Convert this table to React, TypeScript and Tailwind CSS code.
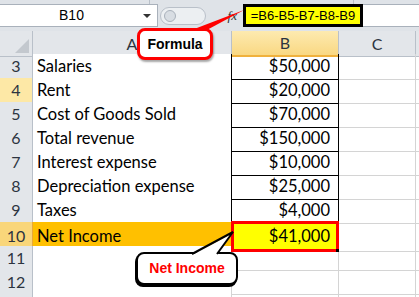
import React from 'react'

type Row = { n: number; label?: string; value?: string }

const rows: Row[] = [
  { n: 3, label: 'Salaries', value: '$50,000' },
  { n: 4, label: 'Rent', value: '$20,000' },
  { n: 5, label: 'Cost of Goods Sold', value: '$70,000' },
  { n: 6, label: 'Total revenue', value: '$150,000' },
  { n: 7, label: 'Interest expense', value: '$10,000' },
  { n: 8, label: 'Depreciation expense', value: '$25,000' },
  { n: 9, label: 'Taxes', value: '$4,000' },
  { n: 10, label: 'Net Income', value: '$41,000' },
  { n: 11 },
  { n: 12 },
  { n: 13 },
]

const cols = 'grid grid-cols-[33px_199px_107px_77px_1fr]'

function RowHeader({ n }: { n: number }) {
  const hi = n === 10
  const soft = n === 4
  return (
    <div
      className={
        'flex items-center justify-center border-r border-b text-[16px] text-[#2c3440] ' +
        (hi
          ? 'bg-[#f9d67a] border-r-[#e8a93a] border-b-[#c9b78e]'
          : soft
            ? 'bg-[#fde8a6] border-r-[#b9c0c9] border-b-[#c9c2a8]'
            : 'bg-[#e3e6ea] border-r-[#b9c0c9] border-b-[#c4c9d0]')
      }
    >
      {/* row 13 is only a sliver at the bottom edge */}
      {n < 13 ? n : null}
    </div>
  )
}

function DataRow({ row }: { row: Row }) {
  const filled = row.label !== undefined
  const net = row.n === 10
  return (
    <div className={cols + ' h-[24px]'}>
      <RowHeader n={row.n} />
      <div
        className={
          'flex items-center pl-[4px] border-r border-b ' +
          (filled ? 'border-black ' : 'border-[#d4d4d4] ') +
          (net ? 'bg-[#ffc000]' : 'bg-white')
        }
      >
        {row.label}
      </div>
      {net ? (
        <div className="relative flex items-center justify-end pr-[6px] border-[3px] border-[#ff0000] bg-[#ffff00] -mt-px -ml-px">
          {row.value}
          <span className="absolute right-[-3px] bottom-[-3px] w-[3px] h-[3px] bg-black" />
        </div>
      ) : (
        <div
          className={
            'flex items-center justify-end pr-[8px] border-r border-b ' +
            (filled ? 'border-black' : 'border-[#d4d4d4]')
          }
        >
          {row.value}
        </div>
      )}
      <div className="border-r border-b border-[#d4d4d4]" />
      <div className="border-b border-[#d4d4d4]" />
    </div>
  )
}

export default function App() {
  return (
    <div className="relative w-[419px] h-[297px] overflow-hidden bg-white font-['Lato','Liberation_Sans',sans-serif] text-[16.5px] text-black">
      {/* ribbon edge */}
      <div className="flex h-[4px] bg-[#dfe3e8]">
        <div className="w-[150px] border-r border-[#b9c0c9]" />
        <div className="w-[204px] border-r border-[#b9c0c9]" />
      </div>

      {/* formula bar */}
      <div className="flex h-[23px] bg-[#dfe3e8]">
        <div className="relative flex w-[158px] items-center bg-white border border-[#a9b1bb] border-l-0">
          <span className="w-[143px] text-center font-['Liberation_Sans',sans-serif] text-[14px]">B10</span>
          <span className="w-0 h-0 border-l-[4px] border-r-[4px] border-t-[4px] border-l-transparent border-r-transparent border-t-[#333]" />
        </div>
        <div className="flex w-[85px] items-center">
          <div className="ml-[2px] flex h-[18px] w-[46px] items-center rounded-full border border-[#b9c0c9] bg-[#eceff2]">
            <span className="ml-[3px] h-[12px] w-[12px] rounded-full border border-[#a9b1bb] bg-[#d8dde3]" />
          </div>
          <span className="ml-auto mr-[6px] font-['Liberation_Serif',serif] italic text-[13px] text-[#333]">fx</span>
        </div>
        <div className="flex flex-1 bg-white border-y border-[#a9b1bb]">
          <div className="flex w-[120px] items-center justify-center border-[3px] border-black bg-[#ffff00] -my-px font-['Liberation_Sans',sans-serif] text-[13px]">
            =B6-B5-B7-B8-B9
          </div>
        </div>
      </div>

      <div className="h-[4px] bg-[#dfe3e8]" />

      {/* column headers */}
      <div className={cols + ' h-[23px] text-[16px] text-[#2c3440]'}>
        <div className="relative border-r border-b border-[#b9c0c9] bg-[#e3e6ea]">
          <svg className="absolute right-[3px] bottom-[3px]" width="14" height="14" viewBox="0 0 14 14">
            <polygon points="14,0 14,14 0,14" fill="#c3c8ce" />
          </svg>
        </div>
        <div className="flex items-center justify-center border-r border-b border-[#b9c0c9] bg-[#e3e6ea]">A</div>
        <div className="flex items-center justify-center border-r border-[#b9c0c9] border-b-2 border-b-[#f0b13c] bg-[linear-gradient(#fdeab0,#f9d883)]">B</div>
        <div className="flex items-center justify-center border-r border-b border-[#b9c0c9] bg-[#e3e6ea]">C</div>
        <div className="border-b border-[#b9c0c9] bg-[#e3e6ea]" />
      </div>

      {rows.map((r) => (
        <DataRow key={r.n} row={r} />
      ))}

      {/* Formula callout */}
      <svg className="absolute left-0 top-0" width="419" height="297" viewBox="0 0 419 297">
        <polygon points="189,31 205,31 244,10" fill="#ff0000" />
      </svg>
      <div className="absolute left-[137px] top-[28px] flex h-[32px] w-[76px] items-center justify-center rounded-[8px] border-[3px] border-[#ff0000] bg-white shadow-[1px_2px_2px_rgba(0,0,0,0.35)] font-['Liberation_Sans',sans-serif] text-[14px] font-bold text-black">
        Formula
      </div>

      {/* Net Income callout */}
      <div className="absolute left-[136px] top-[252px] flex h-[33px] w-[102px] items-center justify-center rounded-[8px] border-2 border-black bg-white shadow-[-1px_2px_0_#000] font-['Liberation_Sans',sans-serif] text-[14px] font-bold text-[#ff0000]">
        Net Income
      </div>
      <svg className="absolute left-0 top-0" width="419" height="297" viewBox="0 0 419 297">
        <polygon points="192,255 217,255 233,233" fill="#ffffff" />
        <polyline points="192,254 233,232 217,254" fill="none" stroke="#000" strokeWidth="2" strokeLinejoin="miter" />
      </svg>
    </div>
  )
}
